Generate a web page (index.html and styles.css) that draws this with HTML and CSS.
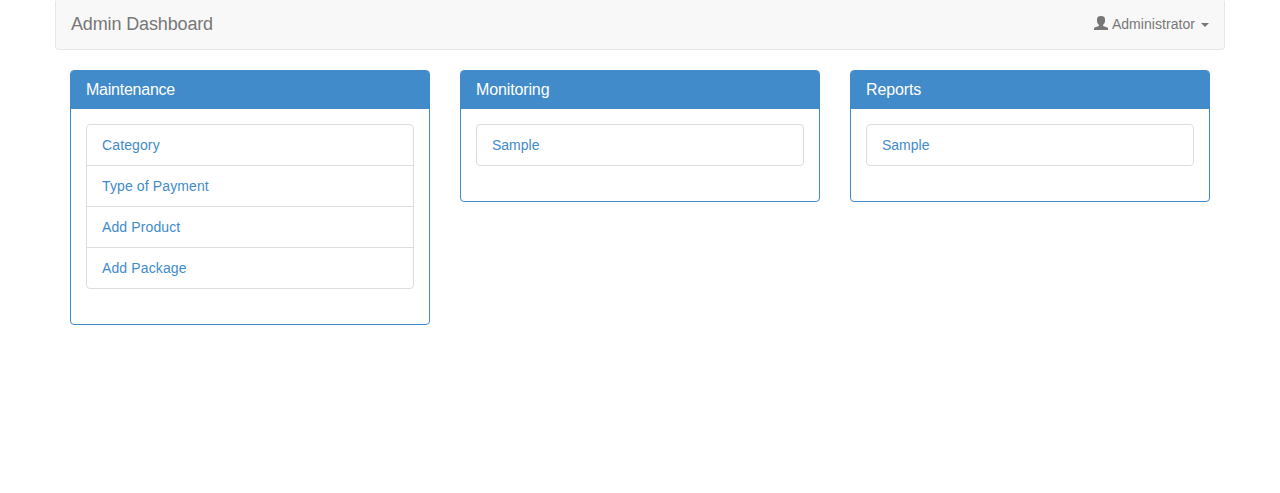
FILE: index.html
```
<!DOCTYPE html>
<html lang="en">
<head>
<meta charset="utf-8">
<title>Admin Dashboard</title>
<link rel="stylesheet" href="styles.css">
</head>
<body>
<div class="container">
  <nav class="navbar">
    <a class="brand" href="#">Admin Dashboard</a>
    <a class="user" href="#">
      <svg class="user-icon" viewBox="0 0 14 14" aria-hidden="true"><path d="M7 0C4.300 0 3 1.200 3 3.300V5c0 1.500.7 2.700 1.600 3.600.6.600.5 1.300-.2 1.600L1.200 11.200C.4 11.500 0 11.900 0 12.500V14h14v-1.500c0-.6-.4-1-1.200-1.300L9.600 10.200c-.7-.3-.8-1-.2-1.600C10.300 7.700 11 6.500 11 5V3.300C11 1.200 9.700 0 7 0z"/></svg>
      <span class="user-name">Administrator</span>
      <span class="caret"></span>
    </a>
  </nav>
  <main class="row">
    <section class="panel">
      <h3 class="panel-heading tight">Maintenance</h3>
      <div class="panel-body">
        <div class="list spaced">
          <a href="#">Category</a>
          <a href="#">Type of Payment</a>
          <a href="#">Add Product</a>
          <a href="#">Add Package</a>
        </div>
      </div>
    </section>
    <section class="panel">
      <h3 class="panel-heading">Monitoring</h3>
      <div class="panel-body">
        <div class="list"><a href="#">Sample</a></div>
      </div>
    </section>
    <section class="panel">
      <h3 class="panel-heading">Reports</h3>
      <div class="panel-body">
        <div class="list"><a href="#">Sample</a></div>
      </div>
    </section>
  </main>
</div>
</body>
</html>
```

FILE: styles.css
```
* { box-sizing: border-box; }
body {
  margin: 0;
  background: #fff;
  color: #333;
  font: 14px/20px "Liberation Sans", Arial, sans-serif;
}
a { text-decoration: none; }
.container { width: 1170px; margin: 0 auto; }
.navbar {
  display: flex;
  justify-content: space-between;
  height: 50px;
  padding: 0 15px;
  margin-bottom: 20px;
  background: #f8f8f8;
  border: 1px solid #e7e7e7;
  border-top: 0;
  border-radius: 2px 2px 4px 4px;
}
.brand { padding-top: 14px; font-size: 18px; letter-spacing: -0.14px; color: #777; }
.user { display: flex; padding-top: 14px; color: #777; }
.user-icon { width: 14px; height: 14px; margin: 2px 3.400px 0 0; fill: #777; }
.user-name { letter-spacing: 0.05px; }
.caret {
  width: 8px;
  height: 4px;
  margin: 9px 0 0 6px;
  border-top: 4px solid #777;
  border-left: 4px solid transparent;
  border-right: 4px solid transparent;
}
.row {
  display: grid;
  grid-template-columns: repeat(3, 1fr);
  gap: 30px;
  align-items: start;
  padding: 0 15px;
}
.panel { border: 1px solid #428bca; border-radius: 4px; }
.panel-heading {
  height: 38px;
  margin: 0;
  padding: 10px 15px;
  background: #428bca;
  border-radius: 2px 2px 0 0;
  color: #fff;
  font-size: 16px;
  font-weight: 500;
  line-height: 17px;
  letter-spacing: -0.13px;
}
.panel-heading.tight { letter-spacing: -0.24px; }
.panel-body { padding: 15px 15px 35px; }
.list { border: 1px solid #ddd; border-radius: 4px; }
.list.spaced { letter-spacing: 0.12px; }
.list a { display: block; padding: 10px 15px; color: #428bca; }
.list a + a { border-top: 1px solid #ddd; }
```
